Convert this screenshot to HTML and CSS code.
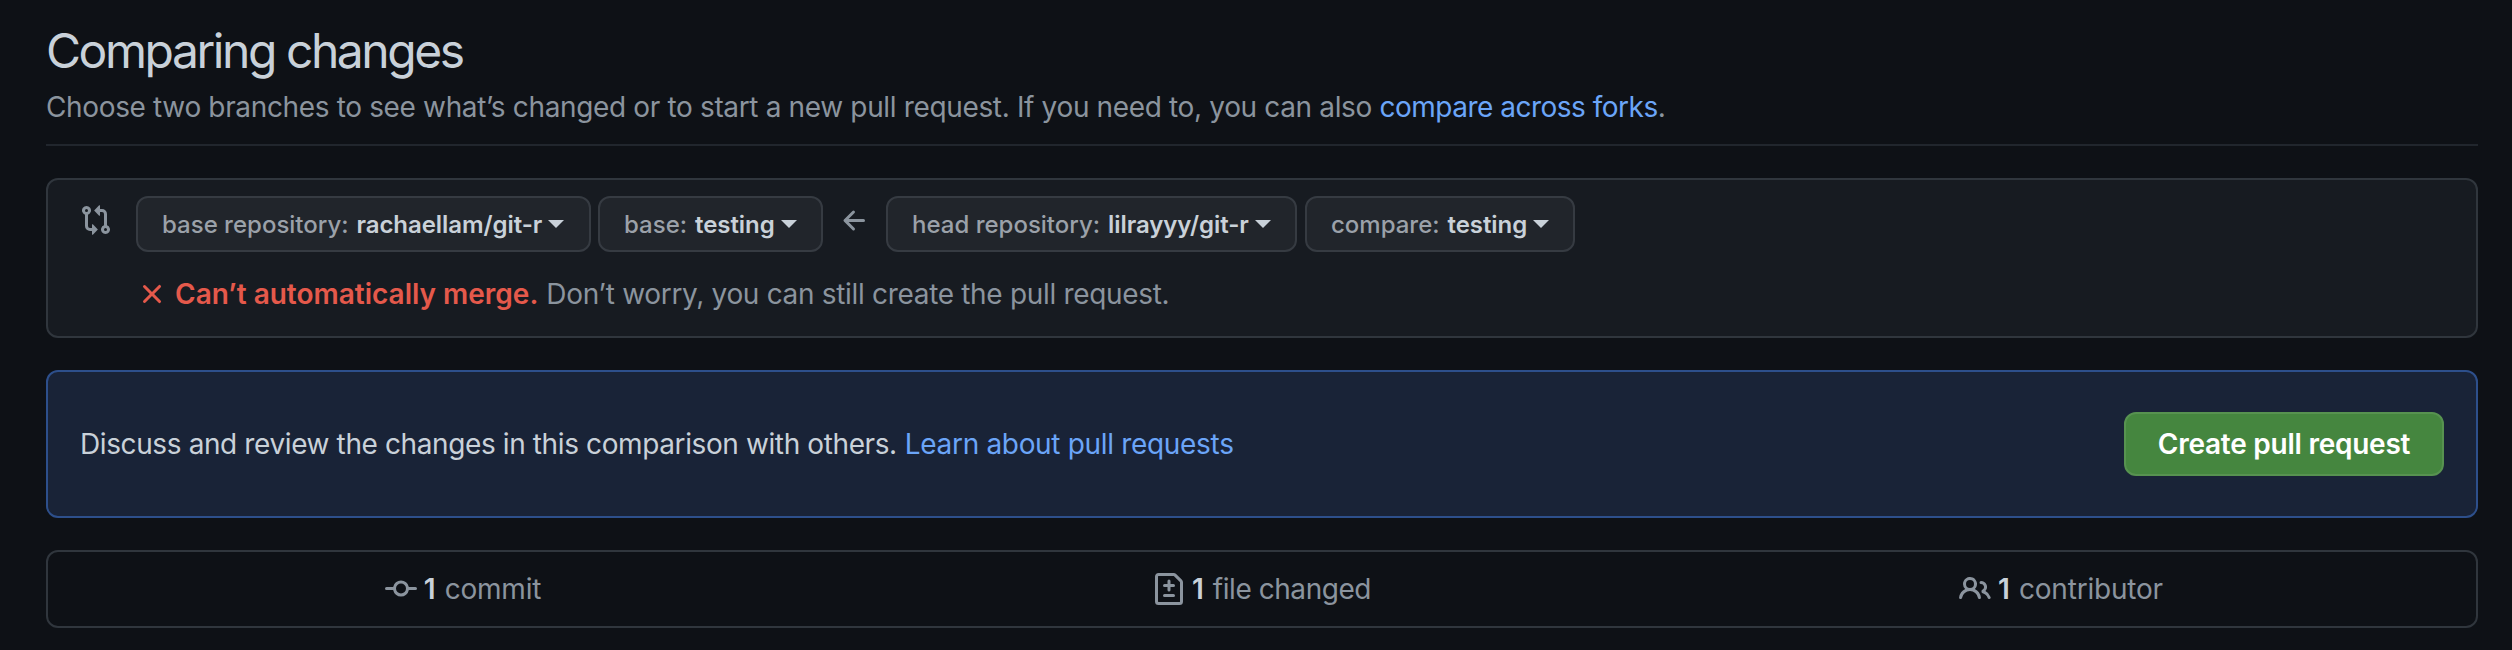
FILE: index.html
```html
<!DOCTYPE html>
<html lang="en">
<head>
<meta charset="utf-8">
<title>Comparing changes</title>
<link rel="stylesheet" href="styles.css">
</head>
<body>
<main class="page">
  <header class="subhead">
    <h1 class="title">Comparing changes</h1>
    <p class="description"><span class="t-desc">Choose two branches to see what’s changed or to start a new pull request. If you need to, you can also </span><a class="link t-fork">compare across forks</a>.</p>
  </header>

  <section class="range">
    <svg class="icon compare-icon" viewBox="0 0 16 16"><path fill-rule="evenodd" d="M9.573.677L7.177 3.073a.25.25 0 000 .354l2.396 2.396A.25.25 0 0010 5.646V4h1a1 1 0 011 1v5.628a2.251 2.251 0 101.500 0V5A2.500 2.500 0 0011 2.500h-1V.854a.25.25 0 00-.427-.177zM6 12v-1.646a.25.25 0 01.427-.177l2.396 2.396a.25.25 0 010 .354l-2.396 2.396A.25.25 0 016 15.146V13.500H5A2.500 2.500 0 012.500 11V5.372a2.250 2.250 0 111.500 0V11a1 1 0 001 1h1zm6.750 0a.750.750 0 100 1.500.750.750 0 000-1.500zM4 3.250a.750.750 0 11-1.500 0 .750.750 0 011.500 0z"/></svg>
    <div class="range-body">
      <div class="selectors">
        <button class="select s1"><span class="key">base repository:</span><span class="value">rachaellam/git-r</span><i class="caret"></i></button>
        <button class="select s2"><span class="key">base:</span><span class="value">testing</span><i class="caret"></i></button>
        <svg class="icon arrow-icon" viewBox="0 0 16 16"><path fill-rule="evenodd" d="M7.780 12.530a.750.750 0 01-1.060 0L2.470 8.280a.750.750 0 010-1.060l4.250-4.250a.750.750 0 011.060 1.060L4.810 7h7.440a.750.750 0 010 1.500H4.810l2.970 2.970a.750.750 0 010 1.060z"/></svg>
        <button class="select s3"><span class="key">head repository:</span><span class="value">lilrayyy/git-r</span><i class="caret"></i></button>
        <button class="select s4"><span class="key">compare:</span><span class="value">testing</span><i class="caret"></i></button>
      </div>
      <p class="merge"><svg class="icon x-icon" viewBox="0 0 16 16"><path fill-rule="evenodd" d="M3.720 3.720a.750.750 0 011.060 0L8 6.940l3.220-3.220a.750.750 0 111.060 1.060L9.060 8l3.220 3.220a.750.750 0 11-1.060 1.060L8 9.060l-3.220 3.220a.750.750 0 01-1.060-1.060L6.940 8 3.720 4.780a.750.750 0 010-1.060z"/></svg><strong class="conflict">Can’t automatically merge.</strong><span class="hint">Don’t worry, you can still create the pull request.</span></p>
    </div>
  </section>

  <section class="discuss">
    <p class="discuss-text"><span class="t-discuss">Discuss and review the changes in this comparison with others.</span><a class="link t-learn">Learn about pull requests</a></p>
    <button class="create">Create pull request</button>
  </section>

  <ul class="stats">
    <li class="stat"><svg class="icon" viewBox="0 0 16 16"><path fill-rule="evenodd" d="M10.500 7.750a2.500 2.500 0 11-5 0 2.500 2.500 0 015 0zm1.430.750a4.002 4.002 0 01-7.860 0H.750a.750.750 0 110-1.500h3.320a4.001 4.001 0 017.860 0h3.320a.750.750 0 110 1.500h-3.320z"/></svg><strong class="count">1</strong><span class="label">commit</span></li>
    <li class="stat"><svg class="icon" viewBox="0 0 16 16"><path fill-rule="evenodd" d="M2.750 1.500a.250.250 0 00-.250.250v12.500c0 .138.112.250.250.250h10.500a.250.250 0 00.250-.250V4.664a.250.250 0 00-.073-.177l-2.914-2.914a.250.250 0 00-.177-.073H2.750zM1 1.750C1 .784 1.784 0 2.750 0h7.586c.464 0 .909.184 1.237.513l2.914 2.914c.329.328.513.773.513 1.237v9.586A1.750 1.750 0 0113.250 16H2.750A1.750 1.750 0 011 14.250V1.750zm7 1.500a.750.750 0 01.750.750v1.500h1.500a.750.750 0 010 1.500h-1.500v1.500a.750.750 0 01-1.500 0V7h-1.500a.750.750 0 010-1.500h1.500V4A.750.750 0 018 3.250zm-3 8a.750.750 0 01.750-.750h4.500a.750.750 0 010 1.500h-4.500a.750.750 0 01-.750-.750z"/></svg><strong class="count">1</strong><span class="label files">file changed</span></li>
    <li class="stat"><svg class="icon" viewBox="0 0 16 16"><path fill-rule="evenodd" d="M5.500 3.500a2 2 0 100 4 2 2 0 000-4zM2 5.500a3.500 3.500 0 115.898 2.549 5.507 5.507 0 013.034 4.084.750.750 0 11-1.482.235 4.001 4.001 0 00-7.900 0 .750.750 0 01-1.482-.236A5.507 5.507 0 013.102 8.050 3.490 3.490 0 012 5.500zM11 4a.750.750 0 100 1.500 1.500 1.500 0 01.666 2.844.750.750 0 00-.416.672v.352a.750.750 0 00.574.730c1.200.289 2.162 1.200 2.522 2.372a.750.750 0 101.434-.440 5.010 5.010 0 00-2.560-3.012A3 3 0 0011 4z"/></svg><strong class="count">1</strong><span class="label">contributor</span></li>
  </ul>
</main>
</body>
</html>
```
FILE: styles.css
```css
* { box-sizing: border-box; }
body {
  margin: 0;
  background: #0e1116;
  color: #c9d1d9;
  font: 28px/42px Inter, "Liberation Sans", sans-serif;
}
h1, p, ul { margin: 0; padding: 0; }
button { font: inherit; }
.page { width: 2512px; height: 650px; padding: 15px 34px 0 46px; }
.icon { width: 32px; height: 32px; fill: #8b949e; flex: none; display: block; }
.link { color: #6ba5f8; }

.subhead { height: 131px; border-bottom: 2px solid #21262d; white-space: nowrap; }
.title { font-size: 48px; line-height: 71px; font-weight: 400; letter-spacing: -2.45px; }
.description { color: #8b949e; }
.t-desc { letter-spacing: -0.35px; }
.t-fork { letter-spacing: -0.5px; }

.range {
  display: flex;
  height: 160px;
  margin-top: 32px;
  padding: 16px 32px;
  background: #171b21;
  border: 2px solid #30363d;
  border-radius: 12px;
}
.compare-icon { margin-top: 8px; }
.range-body { margin-left: 24px; }
.selectors { display: flex; }
.select {
  display: flex;
  align-items: center;
  height: 56px;
  padding: 1px 24px 0;
  background: #21252b;
  border: 2px solid #363b42;
  border-radius: 12px;
  color: #c9d1d9;
  font-size: 24px;
  font-weight: 500;
  line-height: 40px;
  white-space: nowrap;
}
.key { color: #9ba1a9; margin-right: 8px; }
.value { font-weight: 600; letter-spacing: -0.07px; }
.caret { margin: -1px 0 0 6px; border: 8px solid transparent; border-top-color: #c9d1d9; border-bottom: 0; }
.s1 { width: 455px; margin-right: 7px; }
.s2 { width: 225px; }
.s3 { width: 411px; margin-right: 8px; }
.s4 { width: 270px; }
.arrow-icon { margin: 9px 15px 0 16px; }
.merge { display: flex; align-items: center; margin-top: 21px; color: #8b949e; white-space: nowrap; }
.x-icon { fill: #e5594b; }
.conflict { margin-left: 7px; color: #e5594b; font-weight: 600; }
.hint { margin-left: 8px; letter-spacing: -0.32px; }

.discuss {
  display: flex;
  align-items: center;
  justify-content: space-between;
  height: 148px;
  margin-top: 32px;
  padding: 0 32px;
  background: #192337;
  border: 2px solid #2d4f8b;
  border-radius: 12px;
}
.discuss-text { white-space: nowrap; }
.t-discuss { letter-spacing: -0.39px; }
.t-learn { margin-left: 8px; letter-spacing: -0.32px; }
.create {
  width: 320px;
  height: 64px;
  padding: 0;
  background: #45863f;
  border: 2px solid #579250;
  border-radius: 12px;
  color: #fff;
  font-weight: 600;
  letter-spacing: -0.25px;
  white-space: nowrap;
}

.stats {
  display: grid;
  grid-template-columns: 830px 1fr 830px;
  height: 78px;
  margin-top: 32px;
  border: 2px solid #30363d;
  border-radius: 12px;
  list-style: none;
}
.stat { display: flex; align-items: center; justify-content: center; }
.count { margin-left: 7px; font-weight: 600; }
.label { margin-left: 9px; color: #8b949e; letter-spacing: -0.2px; }
.files { letter-spacing: -0.45px; }
```
